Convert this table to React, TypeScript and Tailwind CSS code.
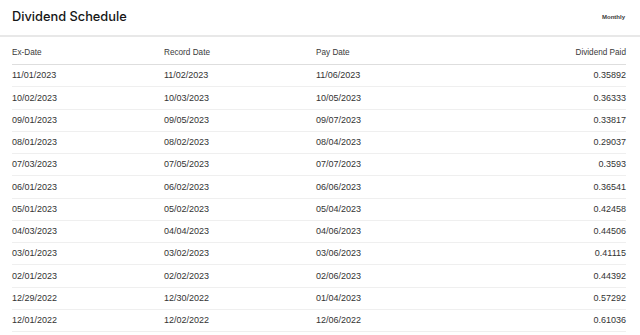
const rows = [
  ['11/01/2023', '11/02/2023', '11/06/2023', '0.35892'],
  ['10/02/2023', '10/03/2023', '10/05/2023', '0.36333'],
  ['09/01/2023', '09/05/2023', '09/07/2023', '0.33817'],
  ['08/01/2023', '08/02/2023', '08/04/2023', '0.29037'],
  ['07/03/2023', '07/05/2023', '07/07/2023', '0.3593'],
  ['06/01/2023', '06/02/2023', '06/06/2023', '0.36541'],
  ['05/01/2023', '05/02/2023', '05/04/2023', '0.42458'],
  ['04/03/2023', '04/04/2023', '04/06/2023', '0.44506'],
  ['03/01/2023', '03/02/2023', '03/06/2023', '0.41115'],
  ['02/01/2023', '02/02/2023', '02/06/2023', '0.44392'],
  ['12/29/2022', '12/30/2022', '01/04/2023', '0.57292'],
  ['12/01/2022', '12/02/2022', '12/06/2022', '0.61036'],
];

export default function App() {
  return (
    <div className="w-[640px] h-[335px] overflow-hidden bg-white font-['Liberation_Sans',Arial,sans-serif]">
      <div className="flex items-center justify-between h-[37px] pl-3 pr-[15px] border-b-2 border-[#e8e8e8]">
        <h2 className="font-['Inter',sans-serif] text-[12.8px] font-medium text-[#161616] pb-[1px]">Dividend Schedule</h2>
        <span className="text-[6px] font-bold text-[#3a3a3a]">Monthly</span>
      </div>

      <div className="pl-3 pr-[14px]">
        <div className="grid grid-cols-[152px_152px_152px_1fr] items-center h-[28px] pt-[6px] border-b border-[#dedede] text-[8.2px] text-[#3a3a3a]">
          <div>Ex-Date</div>
          <div>Record Date</div>
          <div>Pay Date</div>
          <div className="text-right">Dividend Paid</div>
        </div>
        {rows.map((r) => (
          <div
            key={r[0]}
            className="grid grid-cols-[152px_152px_152px_1fr] items-center h-[22.25px] pt-[1px] border-b border-[#efefef] text-[9px] text-[#333]"
          >
            <div>{r[0]}</div>
            <div>{r[1]}</div>
            <div>{r[2]}</div>
            <div className="text-right">{r[3]}</div>
          </div>
        ))}
      </div>
    </div>
  );
}
